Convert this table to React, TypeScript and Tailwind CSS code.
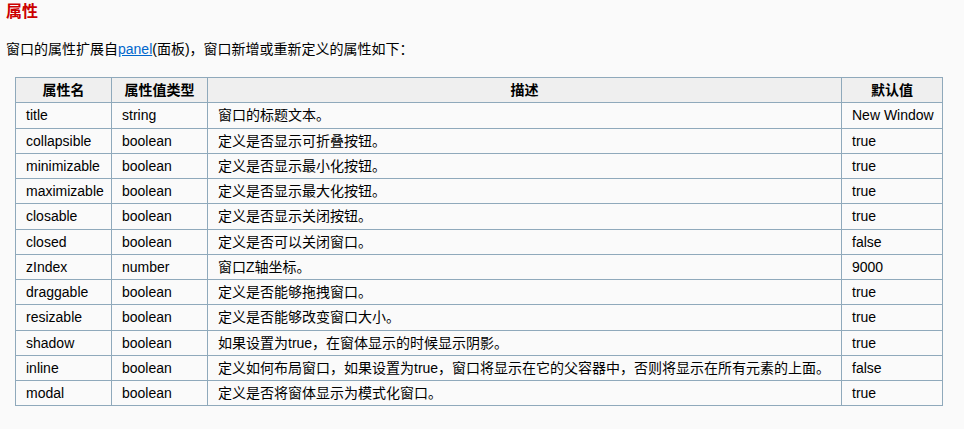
import React from "react";

const rows: [string, string, string, string][] = [
  ["title", "string", "窗口的标题文本。", "New Window"],
  ["collapsible", "boolean", "定义是否显示可折叠按钮。", "true"],
  ["minimizable", "boolean", "定义是否显示最小化按钮。", "true"],
  ["maximizable", "boolean", "定义是否显示最大化按钮。", "true"],
  ["closable", "boolean", "定义是否显示关闭按钮。", "true"],
  ["closed", "boolean", "定义是否可以关闭窗口。", "false"],
  ["zIndex", "number", "窗口Z轴坐标。", "9000"],
  ["draggable", "boolean", "定义是否能够拖拽窗口。", "true"],
  ["resizable", "boolean", "定义是否能够改变窗口大小。", "true"],
  ["shadow", "boolean", "如果设置为true，在窗体显示的时候显示阴影。", "true"],
  [
    "inline",
    "boolean",
    "定义如何布局窗口，如果设置为true，窗口将显示在它的父容器中，否则将显示在所有元素的上面。",
    "false",
  ],
  ["modal", "boolean", "定义是否将窗体显示为模式化窗口。", "true"],
];

const font = { fontFamily: '"Liberation Sans", "Noto Sans CJK SC", sans-serif' };

export default function App() {
  return (
    <div
      className="w-full h-[429px] bg-[#fafafa] pl-[6px] text-black overflow-hidden"
      style={font}
    >
      <h1 className="text-[16px] leading-[24px] font-bold text-[#cc0000]">属性</h1>
      <p className="mt-[13px] text-[14px] leading-[24px]">
        窗口的属性扩展自
        <a href="#" className="text-[#0066cc] underline">
          panel
        </a>
        (面板)，窗口新增或重新定义的属性如下：
      </p>
      <table className="mt-[16px] ml-[9px] w-[927px] table-fixed border-collapse text-[14px]">
        <colgroup>
          <col className="w-[96px]" />
          <col className="w-[96px]" />
          <col className="w-[634px]" />
          <col className="w-[101px]" />
        </colgroup>
        <thead>
          <tr className="h-[25.25px]">
            {["属性名", "属性值类型", "描述", "默认值"].map((h) => (
              <th
                key={h}
                className="border border-[#8fa9bb] bg-[#efefef] font-bold text-center p-0 leading-[18px]"
              >
                {h}
              </th>
            ))}
          </tr>
        </thead>
        <tbody>
          {rows.map((r) => (
            <tr key={r[0]} className="h-[25.25px]">
              <td className="border border-[#8fa9bb] pl-[10px] p-0 leading-[18px] whitespace-nowrap">{r[0]}</td>
              <td className="border border-[#8fa9bb] pl-[10px] p-0 leading-[18px] whitespace-nowrap">{r[1]}</td>
              <td className="border border-[#8fa9bb] pl-[10px] p-0 leading-[18px] whitespace-nowrap">{r[2]}</td>
              <td className="border border-[#8fa9bb] pl-[10px] p-0 leading-[18px] whitespace-nowrap">{r[3]}</td>
            </tr>
          ))}
        </tbody>
      </table>
    </div>
  );
}
